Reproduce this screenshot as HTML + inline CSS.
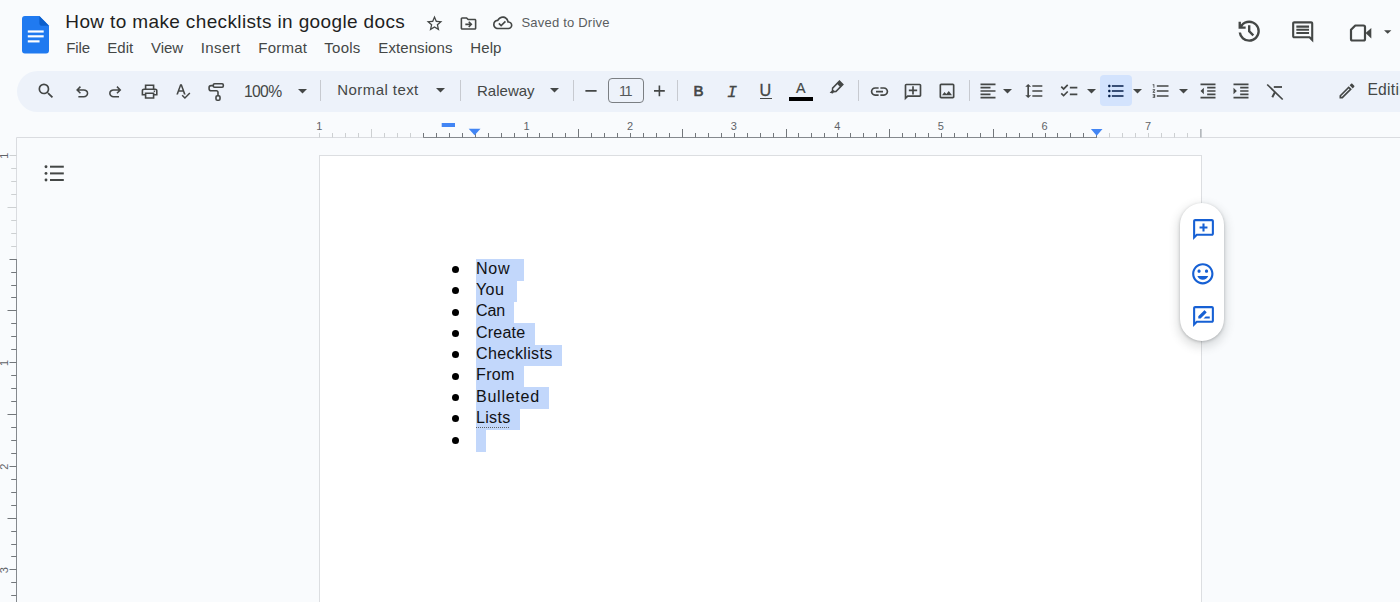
<!DOCTYPE html>
<html><head><meta charset="utf-8"><title>How to make checklists in google docs</title>
<style>
*{box-sizing:border-box;margin:0;padding:0}
html,body{width:1400px;height:602px;overflow:hidden;background:#f9fbfd;font-family:"Liberation Sans",sans-serif;color:#444746}
.abs{position:absolute}
.tx,.li{white-space:nowrap}
.menu{line-height:18px;color:#444746}
.tbt{line-height:18px;color:#444746}
#toolbar{left:17px;top:70.6px;width:1420px;height:41.6px;border-radius:21px;background:#edf2fa}
.sep{top:80px;width:1px;height:21px;background:#c7cad0}
svg{position:absolute;overflow:visible}
.ic{fill:#444746}
#page{left:319px;top:155px;width:883px;height:460px;background:#fff;border:1px solid #dcdee1}
.li{line-height:20px;color:#101114;z-index:3;transform-origin:0 0}
.sel{background:#c2d7fb;left:475.8px;z-index:1}
.bul{left:451.5px;width:7px;height:7px;border-radius:50%;background:#000;z-index:3}
#hl{left:1100px;top:75px;width:32px;height:31px;border-radius:4px;background:#d3e3fd}
#fsbox{left:608px;top:78.3px;width:36px;height:25px;border:1px solid #7b7f83;border-radius:4px}
#pill{left:1179.5px;top:202.6px;width:44.4px;height:138.6px;border-radius:22.2px;background:#fff;box-shadow:0 1px 3px rgba(60,64,67,.3),0 4px 8px 3px rgba(60,64,67,.15);z-index:5}
.gl{white-space:nowrap;color:#444746;line-height:20px}
</style></head><body>
<svg style="left:22.1px;top:16.1px" width="27" height="37.5" viewBox="0 0 28 38" preserveAspectRatio="none">
<path d="M3 0h15l10 10v25a3 3 0 0 1-3 3H3a3 3 0 0 1-3-3V3a3 3 0 0 1 3-3z" fill="#207af0"/>
<path d="M18 0l10 10h-7a3 3 0 0 1-3-3z" fill="#0b5fcc"/>
<rect x="6" y="14.600" width="16.500" height="2.200" fill="#fff"/><rect x="6" y="19.500" width="16.500" height="2.200" fill="#fff"/><rect x="6" y="24.600" width="12.200" height="2.200" fill="#fff"/>
</svg>
<div id="toolbar" class="abs"></div>
<div id="hl" class="abs"></div>
<div id="fsbox" class="abs"></div>
<div class="abs sep" style="left:320px"></div>
<div class="abs sep" style="left:460px"></div>
<div class="abs sep" style="left:573px"></div>
<div class="abs sep" style="left:677px"></div>
<div class="abs sep" style="left:858px"></div>
<div class="abs sep" style="left:969px"></div>
<div id="title" class="abs tx tbt" style="left:65.3px;top:9.5px;font-size:19px;letter-spacing:0.366px;color:#1f1f1f;line-height:24px">How to make checklists in google docs</div>
<div id="saved" class="abs tx " style="left:521.5px;top:15px;font-size:13px;letter-spacing:0.203px;color:#5a5d60;line-height:16px">Saved to Drive</div>
<div id="m1" class="abs tx menu" style="left:66.3px;top:39px;font-size:15px;letter-spacing:-0.135px;">File</div>
<div id="m2" class="abs tx menu" style="left:107.3px;top:39px;font-size:15px;letter-spacing:0.040px;">Edit</div>
<div id="m3" class="abs tx menu" style="left:151px;top:39px;font-size:15px;letter-spacing:-0.071px;">View</div>
<div id="m4" class="abs tx menu" style="left:200.8px;top:39px;font-size:15px;letter-spacing:0.361px;">Insert</div>
<div id="m5" class="abs tx menu" style="left:258.3px;top:39px;font-size:15px;letter-spacing:0.215px;">Format</div>
<div id="m6" class="abs tx menu" style="left:324.3px;top:39px;font-size:15px;letter-spacing:0.260px;">Tools</div>
<div id="m7" class="abs tx menu" style="left:378.3px;top:39px;font-size:15px;letter-spacing:0.087px;">Extensions</div>
<div id="m8" class="abs tx menu" style="left:470.3px;top:39px;font-size:15px;letter-spacing:0.097px;">Help</div>
<div id="t1" class="abs tx tbt" style="left:244px;top:83.1px;font-size:15.7px;letter-spacing:-0.664px;">100%</div>
<div id="t2" class="abs tx tbt" style="left:337.3px;top:81.2px;font-size:15px;letter-spacing:0.430px;">Normal text</div>
<div id="t3" class="abs tx tbt" style="left:477px;top:81.5px;font-size:15px;letter-spacing:0.011px;">Raleway</div>
<div id="t4" class="abs tx tbt" style="left:619.0px;top:81.6px;font-size:14.5px;letter-spacing:-1.600px;color:#55585a">11</div>
<div id="t5" class="abs tx tbt" style="left:1367.4px;top:81.3px;font-size:15.7px;letter-spacing:0.250px;">Editing</div>
<div id="l0" class="abs li" style="left:476.0px;top:258.50px;font-size:15.6px;letter-spacing:0.723px;transform:scaleX(1.03)">Now</div>
<div id="l1" class="abs li" style="left:476.0px;top:279.86px;font-size:15.6px;letter-spacing:0.343px;transform:scaleX(1.03)">You</div>
<div id="l2" class="abs li" style="left:476.0px;top:301.22px;font-size:15.6px;letter-spacing:-0.182px;transform:scaleX(1.03)">Can</div>
<div id="l3" class="abs li" style="left:476.0px;top:322.58px;font-size:15.6px;letter-spacing:0.191px;transform:scaleX(1.03)">Create</div>
<div id="l4" class="abs li" style="left:476.0px;top:343.94px;font-size:15.6px;letter-spacing:0.338px;transform:scaleX(1.03)">Checklists</div>
<div id="l5" class="abs li" style="left:476.0px;top:365.30px;font-size:15.6px;letter-spacing:0.310px;transform:scaleX(1.03)">From</div>
<div id="l6" class="abs li" style="left:476.0px;top:386.66px;font-size:15.6px;letter-spacing:0.705px;transform:scaleX(1.03)">Bulleted</div>
<div id="l7" class="abs li" style="left:476.0px;top:408.02px;font-size:15.6px;letter-spacing:0.293px;transform:scaleX(1.03)">Lists</div>
<svg style="left:0;top:0" width="1400" height="602">
<line x1="16.5" y1="137.5" x2="1400" y2="137.5" stroke="#dadce0" stroke-width="1"/>
<line x1="16.5" y1="137.5" x2="16.5" y2="602" stroke="#dadce0" stroke-width="1"/>
<line x1="423.4" y1="137.5" x2="1097" y2="137.5" stroke="#85898e" stroke-width="1"/>
<line x1="16.5" y1="259" x2="16.5" y2="602" stroke="#85898e" stroke-width="1"/>
<line x1="319.50" y1="133.0" x2="319.50" y2="137.5" stroke="#cdd0d2" stroke-width="1"/>
<line x1="332.50" y1="133.0" x2="332.50" y2="137.5" stroke="#cdd0d2" stroke-width="1"/>
<line x1="345.50" y1="133.0" x2="345.50" y2="137.5" stroke="#cdd0d2" stroke-width="1"/>
<line x1="358.50" y1="133.0" x2="358.50" y2="137.5" stroke="#cdd0d2" stroke-width="1"/>
<line x1="371.50" y1="129.0" x2="371.50" y2="137.5" stroke="#cdd0d2" stroke-width="1"/>
<line x1="384.50" y1="133.0" x2="384.50" y2="137.5" stroke="#cdd0d2" stroke-width="1"/>
<line x1="397.50" y1="133.0" x2="397.50" y2="137.5" stroke="#cdd0d2" stroke-width="1"/>
<line x1="410.50" y1="133.0" x2="410.50" y2="137.5" stroke="#cdd0d2" stroke-width="1"/>
<line x1="423.50" y1="133.0" x2="423.50" y2="137.5" stroke="#73777b" stroke-width="1"/>
<line x1="436.50" y1="133.0" x2="436.50" y2="137.5" stroke="#73777b" stroke-width="1"/>
<line x1="449.50" y1="133.0" x2="449.50" y2="137.5" stroke="#73777b" stroke-width="1"/>
<line x1="462.50" y1="133.0" x2="462.50" y2="137.5" stroke="#73777b" stroke-width="1"/>
<line x1="475.50" y1="129.0" x2="475.50" y2="137.5" stroke="#73777b" stroke-width="1"/>
<line x1="488.50" y1="133.0" x2="488.50" y2="137.5" stroke="#73777b" stroke-width="1"/>
<line x1="501.50" y1="133.0" x2="501.50" y2="137.5" stroke="#73777b" stroke-width="1"/>
<line x1="514.50" y1="133.0" x2="514.50" y2="137.5" stroke="#73777b" stroke-width="1"/>
<line x1="527.50" y1="133.0" x2="527.50" y2="137.5" stroke="#73777b" stroke-width="1"/>
<line x1="539.50" y1="133.0" x2="539.50" y2="137.5" stroke="#73777b" stroke-width="1"/>
<line x1="552.50" y1="133.0" x2="552.50" y2="137.5" stroke="#73777b" stroke-width="1"/>
<line x1="565.50" y1="133.0" x2="565.50" y2="137.5" stroke="#73777b" stroke-width="1"/>
<line x1="578.50" y1="129.0" x2="578.50" y2="137.5" stroke="#73777b" stroke-width="1"/>
<line x1="591.50" y1="133.0" x2="591.50" y2="137.5" stroke="#73777b" stroke-width="1"/>
<line x1="604.50" y1="133.0" x2="604.50" y2="137.5" stroke="#73777b" stroke-width="1"/>
<line x1="617.50" y1="133.0" x2="617.50" y2="137.5" stroke="#73777b" stroke-width="1"/>
<line x1="630.50" y1="133.0" x2="630.50" y2="137.5" stroke="#73777b" stroke-width="1"/>
<line x1="643.50" y1="133.0" x2="643.50" y2="137.5" stroke="#73777b" stroke-width="1"/>
<line x1="656.50" y1="133.0" x2="656.50" y2="137.5" stroke="#73777b" stroke-width="1"/>
<line x1="669.50" y1="133.0" x2="669.50" y2="137.5" stroke="#73777b" stroke-width="1"/>
<line x1="682.50" y1="129.0" x2="682.50" y2="137.5" stroke="#73777b" stroke-width="1"/>
<line x1="695.50" y1="133.0" x2="695.50" y2="137.5" stroke="#73777b" stroke-width="1"/>
<line x1="708.50" y1="133.0" x2="708.50" y2="137.5" stroke="#73777b" stroke-width="1"/>
<line x1="721.50" y1="133.0" x2="721.50" y2="137.5" stroke="#73777b" stroke-width="1"/>
<line x1="734.50" y1="133.0" x2="734.50" y2="137.5" stroke="#73777b" stroke-width="1"/>
<line x1="747.50" y1="133.0" x2="747.50" y2="137.5" stroke="#73777b" stroke-width="1"/>
<line x1="760.50" y1="133.0" x2="760.50" y2="137.5" stroke="#73777b" stroke-width="1"/>
<line x1="773.50" y1="133.0" x2="773.50" y2="137.5" stroke="#73777b" stroke-width="1"/>
<line x1="786.50" y1="129.0" x2="786.50" y2="137.5" stroke="#73777b" stroke-width="1"/>
<line x1="798.50" y1="133.0" x2="798.50" y2="137.5" stroke="#73777b" stroke-width="1"/>
<line x1="811.50" y1="133.0" x2="811.50" y2="137.5" stroke="#73777b" stroke-width="1"/>
<line x1="824.50" y1="133.0" x2="824.50" y2="137.5" stroke="#73777b" stroke-width="1"/>
<line x1="837.50" y1="133.0" x2="837.50" y2="137.5" stroke="#73777b" stroke-width="1"/>
<line x1="850.50" y1="133.0" x2="850.50" y2="137.5" stroke="#73777b" stroke-width="1"/>
<line x1="863.50" y1="133.0" x2="863.50" y2="137.5" stroke="#73777b" stroke-width="1"/>
<line x1="876.50" y1="133.0" x2="876.50" y2="137.5" stroke="#73777b" stroke-width="1"/>
<line x1="889.50" y1="129.0" x2="889.50" y2="137.5" stroke="#73777b" stroke-width="1"/>
<line x1="902.50" y1="133.0" x2="902.50" y2="137.5" stroke="#73777b" stroke-width="1"/>
<line x1="915.50" y1="133.0" x2="915.50" y2="137.5" stroke="#73777b" stroke-width="1"/>
<line x1="928.50" y1="133.0" x2="928.50" y2="137.5" stroke="#73777b" stroke-width="1"/>
<line x1="941.50" y1="133.0" x2="941.50" y2="137.5" stroke="#73777b" stroke-width="1"/>
<line x1="954.50" y1="133.0" x2="954.50" y2="137.5" stroke="#73777b" stroke-width="1"/>
<line x1="967.50" y1="133.0" x2="967.50" y2="137.5" stroke="#73777b" stroke-width="1"/>
<line x1="980.50" y1="133.0" x2="980.50" y2="137.5" stroke="#73777b" stroke-width="1"/>
<line x1="993.50" y1="129.0" x2="993.50" y2="137.5" stroke="#73777b" stroke-width="1"/>
<line x1="1006.50" y1="133.0" x2="1006.50" y2="137.5" stroke="#73777b" stroke-width="1"/>
<line x1="1019.50" y1="133.0" x2="1019.50" y2="137.5" stroke="#73777b" stroke-width="1"/>
<line x1="1032.50" y1="133.0" x2="1032.50" y2="137.5" stroke="#73777b" stroke-width="1"/>
<line x1="1045.50" y1="133.0" x2="1045.50" y2="137.5" stroke="#73777b" stroke-width="1"/>
<line x1="1057.50" y1="133.0" x2="1057.50" y2="137.5" stroke="#73777b" stroke-width="1"/>
<line x1="1070.50" y1="133.0" x2="1070.50" y2="137.5" stroke="#73777b" stroke-width="1"/>
<line x1="1083.50" y1="133.0" x2="1083.50" y2="137.5" stroke="#73777b" stroke-width="1"/>
<line x1="1096.50" y1="129.0" x2="1096.50" y2="137.5" stroke="#73777b" stroke-width="1"/>
<line x1="1109.50" y1="133.0" x2="1109.50" y2="137.5" stroke="#cdd0d2" stroke-width="1"/>
<line x1="1122.50" y1="133.0" x2="1122.50" y2="137.5" stroke="#cdd0d2" stroke-width="1"/>
<line x1="1135.50" y1="133.0" x2="1135.50" y2="137.5" stroke="#cdd0d2" stroke-width="1"/>
<line x1="1148.50" y1="133.0" x2="1148.50" y2="137.5" stroke="#cdd0d2" stroke-width="1"/>
<line x1="1161.50" y1="133.0" x2="1161.50" y2="137.5" stroke="#cdd0d2" stroke-width="1"/>
<line x1="1174.50" y1="133.0" x2="1174.50" y2="137.5" stroke="#cdd0d2" stroke-width="1"/>
<line x1="1187.50" y1="133.0" x2="1187.50" y2="137.5" stroke="#cdd0d2" stroke-width="1"/>
<line x1="1200.50" y1="129.0" x2="1200.50" y2="137.5" stroke="#cdd0d2" stroke-width="1"/>
<line x1="1201" y1="129" x2="1201" y2="137.5" stroke="#9aa0a6" stroke-width="1"/>
<text x="319.3" y="130.3" font-size="11" fill="#5f6368" text-anchor="middle" font-family="Liberation Sans, sans-serif">1</text>
<text x="526.5" y="130.3" font-size="11" fill="#5f6368" text-anchor="middle" font-family="Liberation Sans, sans-serif">1</text>
<text x="630.1" y="130.3" font-size="11" fill="#5f6368" text-anchor="middle" font-family="Liberation Sans, sans-serif">2</text>
<text x="733.7" y="130.3" font-size="11" fill="#5f6368" text-anchor="middle" font-family="Liberation Sans, sans-serif">3</text>
<text x="837.3" y="130.3" font-size="11" fill="#5f6368" text-anchor="middle" font-family="Liberation Sans, sans-serif">4</text>
<text x="940.9" y="130.3" font-size="11" fill="#5f6368" text-anchor="middle" font-family="Liberation Sans, sans-serif">5</text>
<text x="1044.5" y="130.3" font-size="11" fill="#5f6368" text-anchor="middle" font-family="Liberation Sans, sans-serif">6</text>
<text x="1148.1" y="130.3" font-size="11" fill="#5f6368" text-anchor="middle" font-family="Liberation Sans, sans-serif">7</text>
<line x1="9.5" y1="155.50" x2="16.5" y2="155.50" stroke="#cdd0d2" stroke-width="1"/>
<line x1="11.2" y1="168.50" x2="16.5" y2="168.50" stroke="#cdd0d2" stroke-width="1"/>
<line x1="11.2" y1="181.50" x2="16.5" y2="181.50" stroke="#cdd0d2" stroke-width="1"/>
<line x1="11.2" y1="194.50" x2="16.5" y2="194.50" stroke="#cdd0d2" stroke-width="1"/>
<line x1="7.5" y1="207.50" x2="16.5" y2="207.50" stroke="#cdd0d2" stroke-width="1"/>
<line x1="11.2" y1="220.50" x2="16.5" y2="220.50" stroke="#cdd0d2" stroke-width="1"/>
<line x1="11.2" y1="233.50" x2="16.5" y2="233.50" stroke="#cdd0d2" stroke-width="1"/>
<line x1="11.2" y1="246.50" x2="16.5" y2="246.50" stroke="#cdd0d2" stroke-width="1"/>
<line x1="9.5" y1="259.50" x2="16.5" y2="259.50" stroke="#73777b" stroke-width="1"/>
<line x1="11.2" y1="272.50" x2="16.5" y2="272.50" stroke="#73777b" stroke-width="1"/>
<line x1="11.2" y1="285.50" x2="16.5" y2="285.50" stroke="#73777b" stroke-width="1"/>
<line x1="11.2" y1="297.50" x2="16.5" y2="297.50" stroke="#73777b" stroke-width="1"/>
<line x1="7.5" y1="310.50" x2="16.5" y2="310.50" stroke="#73777b" stroke-width="1"/>
<line x1="11.2" y1="323.50" x2="16.5" y2="323.50" stroke="#73777b" stroke-width="1"/>
<line x1="11.2" y1="336.50" x2="16.5" y2="336.50" stroke="#73777b" stroke-width="1"/>
<line x1="11.2" y1="349.50" x2="16.5" y2="349.50" stroke="#73777b" stroke-width="1"/>
<line x1="9.5" y1="362.50" x2="16.5" y2="362.50" stroke="#73777b" stroke-width="1"/>
<line x1="11.2" y1="375.50" x2="16.5" y2="375.50" stroke="#73777b" stroke-width="1"/>
<line x1="11.2" y1="388.50" x2="16.5" y2="388.50" stroke="#73777b" stroke-width="1"/>
<line x1="11.2" y1="401.50" x2="16.5" y2="401.50" stroke="#73777b" stroke-width="1"/>
<line x1="7.5" y1="414.50" x2="16.5" y2="414.50" stroke="#73777b" stroke-width="1"/>
<line x1="11.2" y1="427.50" x2="16.5" y2="427.50" stroke="#73777b" stroke-width="1"/>
<line x1="11.2" y1="440.50" x2="16.5" y2="440.50" stroke="#73777b" stroke-width="1"/>
<line x1="11.2" y1="453.50" x2="16.5" y2="453.50" stroke="#73777b" stroke-width="1"/>
<line x1="9.5" y1="466.50" x2="16.5" y2="466.50" stroke="#73777b" stroke-width="1"/>
<line x1="11.2" y1="479.50" x2="16.5" y2="479.50" stroke="#73777b" stroke-width="1"/>
<line x1="11.2" y1="492.50" x2="16.5" y2="492.50" stroke="#73777b" stroke-width="1"/>
<line x1="11.2" y1="505.50" x2="16.5" y2="505.50" stroke="#73777b" stroke-width="1"/>
<line x1="7.5" y1="518.50" x2="16.5" y2="518.50" stroke="#73777b" stroke-width="1"/>
<line x1="11.2" y1="531.50" x2="16.5" y2="531.50" stroke="#73777b" stroke-width="1"/>
<line x1="11.2" y1="544.50" x2="16.5" y2="544.50" stroke="#73777b" stroke-width="1"/>
<line x1="11.2" y1="556.50" x2="16.5" y2="556.50" stroke="#73777b" stroke-width="1"/>
<line x1="9.5" y1="569.50" x2="16.5" y2="569.50" stroke="#73777b" stroke-width="1"/>
<line x1="11.2" y1="582.50" x2="16.5" y2="582.50" stroke="#73777b" stroke-width="1"/>
<line x1="11.2" y1="595.50" x2="16.5" y2="595.50" stroke="#73777b" stroke-width="1"/>
<text transform="translate(8.3,155.8) rotate(-90)" font-size="11" fill="#5f6368" text-anchor="middle" font-family="Liberation Sans, sans-serif">1</text>
<text transform="translate(8.3,363.0) rotate(-90)" font-size="11" fill="#5f6368" text-anchor="middle" font-family="Liberation Sans, sans-serif">1</text>
<text transform="translate(8.3,466.6) rotate(-90)" font-size="11" fill="#5f6368" text-anchor="middle" font-family="Liberation Sans, sans-serif">2</text>
<text transform="translate(8.3,570.2) rotate(-90)" font-size="11" fill="#5f6368" text-anchor="middle" font-family="Liberation Sans, sans-serif">3</text>
<rect x="441.7" y="123" width="13.3" height="4" fill="#4285f4"/>
<path d="M468.7 128.7h11.8l-5.9 6.6z" fill="#4285f4"/>
<path d="M1090.9 128.9h11.6l-5.8 6.8z" fill="#4285f4"/>
</svg>
<div id="page" class="abs"></div>
<div class="abs sel" style="top:259.1px;height:21.66px;width:48.1px"></div>
<div class="abs bul" style="top:265.90px"></div>
<div class="abs sel" style="top:280.46px;height:21.66px;width:41.6px"></div>
<div class="abs bul" style="top:287.26px"></div>
<div class="abs sel" style="top:301.82px;height:21.66px;width:38.6px"></div>
<div class="abs bul" style="top:308.62px"></div>
<div class="abs sel" style="top:323.18px;height:21.66px;width:58.8px"></div>
<div class="abs bul" style="top:329.98px"></div>
<div class="abs sel" style="top:344.54px;height:21.66px;width:86.0px"></div>
<div class="abs bul" style="top:351.34px"></div>
<div class="abs sel" style="top:365.9px;height:21.66px;width:48.1px"></div>
<div class="abs bul" style="top:372.70px"></div>
<div class="abs sel" style="top:387.26px;height:21.66px;width:73.0px"></div>
<div class="abs bul" style="top:394.06px"></div>
<div class="abs sel" style="top:408.62px;height:21.66px;width:44.3px"></div>
<div class="abs bul" style="top:415.42px"></div>
<div class="abs sel" style="top:429.98px;height:21.66px;width:9.9px"></div>
<div class="abs bul" style="top:436.78px"></div>
<div class="abs" style="left:476.2px;top:426.5px;width:33px;height:0;border-top:1.5px dotted #5f6368;z-index:4"></div>
<div id="pill" class="abs"></div>
<svg style="left:36.20px;top:81.00px;" width="20" height="20" viewBox="0 0 24 24" fill="#444746"><path d="M15.5 14h-.79l-.28-.27A6.471 6.471 0 0 0 16 9.5 6.5 6.5 0 1 0 9.5 16c1.61 0 3.09-.59 4.23-1.57l.27.28v.79l5 4.99L20.49 19l-4.99-5zm-6 0C7.01 14 5 11.990 5 9.500S7.010 5 9.500 5 14 7.010 14 9.500 11.990 14 9.500 14z"/></svg>
<svg style="left:73.40px;top:83.40px;" width="18.4" height="18.4" viewBox="0 -960 960 960" fill="#444746"><path d="M280-200v-80h284q63 0 109.500-40T720-420q0-60-46.500-100T564-560H312l104 104-56 56-200-200 200-200 56 56-104 104h252q97 0 166.500 63T800-420q0 94-69.500 157T564-200H280Z"/></svg>
<svg style="left:106.40px;top:83.40px;" width="18.4" height="18.4" viewBox="0 -960 960 960" fill="#444746"><path d="M396-200q-97 0-166.500-63T160-420q0-94 69.500-157T396-640h252L544-744l56-56 200 200-200 200-56-56 104-104H396q-63 0-109.500 40T240-420q0 60 46.500 100T396-280h284v80H396Z"/></svg>
<svg style="left:140.30px;top:81.70px;" width="19.2" height="19.2" viewBox="0 -960 960 960" fill="#444746"><path d="M640-640v-120H320v120h-80v-200h480v200h-80Zm-480 80h640-640Zm560 100q17 0 28.500-11.500T760-500q0-17-11.500-28.500T720-540q-17 0-28.500 11.500T680-500q0 17 11.500 28.500T720-460Zm-80 260v-160H320v160h320Zm80 80H240v-160H80v-240q0-51 35-85.500t85-34.500h560q51 0 85.500 34.500T880-520v240H720v160Zm80-240v-160q0-17-11.500-28.500T760-560H200q-17 0-28.500 11.500T160-520v160h80v-80h480v80h80Z"/></svg>
<svg style="left:174.30px;top:81.90px;" width="18.6" height="18.6" viewBox="0 -960 960 960" fill="#444746"><path d="M564-80 394-250l56-56 114 114 226-226 56 56L564-80ZM120-320l194-520h94l194 520h-92l-46-132H254l-46 132h-88Zm162-208h156l-76-216h-4l-76 216Z"/></svg>
<svg style="left:0;top:0" width="1400" height="120"><g fill="none" stroke="#444746" stroke-width="1.600" stroke-linejoin="round" stroke-linecap="round"><rect x="213.300" y="83.800" width="10" height="3.500" rx="1.200"/><path d="M213.300 85.600h-2.200a2 2 0 0 0-2 2v1.200a2 2 0 0 0 2 2h5.400a1.500 1.500 0 0 1 1.500 1.500v3.300"/><rect x="216" y="95.700" width="4" height="4.600" rx="1.300"/></g></svg>
<svg style="left:297.50px;top:88.95px" width="9.0" height="4.7" viewBox="0 0 10 5" fill="#444746"><path d="M0 0h10L5 5z"/></svg>
<svg style="left:436.10px;top:88.45px" width="9.0" height="4.7" viewBox="0 0 10 5" fill="#444746"><path d="M0 0h10L5 5z"/></svg>
<svg style="left:549.60px;top:88.45px" width="9.0" height="4.7" viewBox="0 0 10 5" fill="#444746"><path d="M0 0h10L5 5z"/></svg>
<svg style="left:0;top:0" width="1400" height="120"><g stroke="#444746" stroke-width="1.600" fill="none"><path d="M585.400 90.900h11.200M654 90.900h10.800M659.400 85.500v10.800"/></g></svg>
<svg style="left:868.70px;top:81.10px;" width="21" height="21" viewBox="0 0 24 24" fill="#444746"><path d="M3.900 12c0-1.710 1.390-3.100 3.100-3.100h4V7H7c-2.760 0-5 2.240-5 5s2.240 5 5 5h4v-1.900H7c-1.710 0-3.100-1.390-3.100-3.100zM8 13h8v-2H8v2zm9-6h-4v1.900h4c1.710 0 3.100 1.390 3.100 3.100s-1.390 3.100-3.100 3.100h-4V17h4c2.760 0 5-2.240 5-5s-2.240-5-5-5z"/></svg>
<svg style="left:902.60px;top:81.50px;" width="20" height="20" viewBox="0 0 24 24" fill="#444746"><g transform="translate(24,0) scale(-1,1)"><path d="M22 4c0-1.100-.9-2-2-2H4c-1.100 0-2 .9-2 2v12c0 1.100.9 2 2 2h14l4 4V4zm-2 13.170L18.830 16H4V4h16v13.170zM13 5h-2v4H7v2h4v4h2v-4h4V9h-4z"/></g></svg>
<svg style="left:937.30px;top:81.40px;" width="20" height="20" viewBox="0 0 24 24" fill="#444746"><path d="M19 5v14H5V5h14m0-2H5c-1.100 0-2 .9-2 2v14c0 1.100.9 2 2 2h14c1.100 0 2-.9 2-2V5c0-1.100-.9-2-2-2zm-4.860 8.860l-3 3.870L9 13.140 6 17h12l-3.860-5.140z"/></svg>
<svg style="left:978.00px;top:81.20px;" width="20" height="20" viewBox="0 0 24 24" fill="#444746"><path d="M15 15H3v2h12v-2zm0-8H3v2h12V7zM3 13h18v-2H3v2zm0 8h18v-2H3v2zM3 3v2h18V3H3z"/></svg>
<svg style="left:1003.00px;top:89.25px" width="9.0" height="4.7" viewBox="0 0 10 5" fill="#444746"><path d="M0 0h10L5 5z"/></svg>
<svg style="left:1023.60px;top:81.40px;" width="20" height="20" viewBox="0 0 24 24" fill="#444746"><path d="M6 7h2.500L5 3.500 1.500 7H4v10H1.500L5 20.500 8.500 17H6V7zm4-2v2h12V5H10zm0 14h12v-2H10v2zm0-6h12v-2H10v2z"/></svg>
<svg style="left:1059.20px;top:81.20px;" width="20" height="20" viewBox="0 0 24 24" fill="#444746"><path d="M22 7h-9v2h9V7zm0 8h-9v2h9v-2zM5.540 11L2 7.460l1.410-1.410 2.120 2.120 4.240-4.240 1.410 1.410L5.540 11zm0 8L2 15.460l1.410-1.410 2.120 2.120 4.240-4.240 1.410 1.410L5.540 19z"/></svg>
<svg style="left:1087.00px;top:89.25px" width="9.0" height="4.7" viewBox="0 0 10 5" fill="#444746"><path d="M0 0h10L5 5z"/></svg>
<svg style="left:1105.60px;top:81.40px;" width="20" height="20" viewBox="0 0 24 24" fill="#041e49"><path d="M4 10.500c-.830 0-1.500.670-1.500 1.500s.670 1.500 1.500 1.500 1.500-.670 1.500-1.500-.670-1.500-1.500-1.500zm0-6c-.830 0-1.500.670-1.500 1.500S3.170 7.500 4 7.500 5.500 6.830 5.500 6 4.830 4.500 4 4.500zm0 12c-.830 0-1.500.680-1.500 1.500s.680 1.500 1.500 1.500 1.500-.680 1.500-1.500-.670-1.500-1.500-1.500zM7 19h14v-2H7v2zm0-6h14v-2H7v2zm0-8v2h14V5H7z"/></svg>
<svg style="left:1133.00px;top:89.25px" width="9.0" height="4.7" viewBox="0 0 10 5" fill="#444746"><path d="M0 0h10L5 5z"/></svg>
<svg style="left:1151.40px;top:81.40px;" width="20" height="20" viewBox="0 0 24 24" fill="#444746"><path d="M2 17h2v.500H3v1h1v.500H2v1h3v-4H2v1zm1-9h1V4H2v1h1v3zm-1 3h1.800L2 13.100v.9h3v-1H3.200L5 10.900V10H2v1zm5-6v2h14V5H7zm0 14h14v-2H7v2zm0-6h14v-2H7v2z"/></svg>
<svg style="left:1178.90px;top:89.25px" width="9.0" height="4.7" viewBox="0 0 10 5" fill="#444746"><path d="M0 0h10L5 5z"/></svg>
<svg style="left:1197.60px;top:81.20px;" width="20" height="20" viewBox="0 0 24 24" fill="#444746"><path d="M11 17h10v-2H11v2zm-8-5l4 4V8l-4 4zm0 9h18v-2H3v2zM3 3v2h18V3H3zm8 6h10V7H11v2zm0 4h10v-2H11v2z"/></svg>
<svg style="left:1231.00px;top:81.20px;" width="20" height="20" viewBox="0 0 24 24" fill="#444746"><path d="M3 21h18v-2H3v2zM3 8v8l4-4-4-4zm8 9h10v-2H11v2zM3 3v2h18V3H3zm8 6h10V7H11v2zm0 4h10v-2H11v2z"/></svg>
<svg style="left:0;top:0" width="1400" height="120"><g fill="none" stroke="#444746" stroke-width="1.700"><path d="M1267.200 84.500L1282.700 99.500"/><path d="M1273.800 87h8.200" stroke-width="1.800"/><path d="M1274.900 92.200L1272.300 97.300" stroke-width="2"/></g></svg>
<svg style="left:1337.30px;top:81.20px;" width="20" height="20" viewBox="0 0 24 24" fill="#444746"><path d="M14.060 9.020l.920.920L5.920 19H5v-.920l9.060-9.060M17.660 3c-.250 0-.510.100-.700.290l-1.830 1.830 3.750 3.750 1.830-1.830c.390-.390.390-1.020 0-1.410l-2.340-2.340c-.200-.200-.450-.290-.710-.290zm-3.600 3.190L3 17.250V21h3.750L17.810 9.940l-3.750-3.750z"/></svg>
<svg style="left:825.7px;top:79px" width="19" height="19" viewBox="0 0 24 24" fill="#444746"><g transform="rotate(45 12 12)"><path d="M8 1h8v13.500l-2 2.800v1.500l-3.500 2.200v-3.700l-2.500-2.800z"/><path d="M10 6.500h4v7.300l-1 1.400h-2l-1-1.400z" fill="#edf2fa"/></g></svg>
<div class="abs gl" style="left:693.6px;top:80.7px;font-size:15px;-webkit-text-stroke:0.7px #444746">B</div>
<div class="abs gl" style="left:726.9px;top:82.6px;font-size:16.8px;font-family:'Liberation Mono',monospace;font-style:italic;-webkit-text-stroke:0.3px #444746">I</div>
<div class="abs gl" style="left:759.6px;top:80.1px;font-size:16.2px;-webkit-text-stroke:0.3px #444746">U</div>
<div class="abs" style="left:759.800px;top:97.500px;width:12px;height:1.500px;background:#444746"></div>
<div class="abs gl" style="left:796.1px;top:78.4px;font-size:14.3px;-webkit-text-stroke:0.2px #444746">A</div>
<div class="abs" style="left:789px;top:97.200px;width:23.600px;height:4.100px;background:#000"></div>
<svg style="left:424.6px;top:14.2px;" width="19" height="19" viewBox="0 0 24 24" fill="#444746"><path d="M22 9.240l-7.190-.620L12 2 9.190 8.630 2 9.240l5.460 4.730L5.820 21 12 17.270 18.180 21l-1.630-7.030L22 9.240zM12 15.400l-3.760 2.270 1-4.280-3.320-2.880 4.380-.380L12 6.100l1.710 4.040 4.380.380-3.320 2.880 1 4.280L12 15.400z"/></svg>
<svg style="left:459.00px;top:13.70px;" width="19" height="19" viewBox="0 0 24 24" fill="#444746"><path d="M20 6h-8l-2-2H4c-1.100 0-1.990.9-1.990 2L2 18c0 1.100.9 2 2 2h16c1.100 0 2-.9 2-2V8c0-1.100-.9-2-2-2zm0 12H4V6h5.170l2 2H20v10z M8 12.100h5.200l-1.600-1.600L13 9.100l4 4-4 4-1.400-1.400 1.600-1.600H8z"/></svg>
<svg style="left:493.05px;top:13.45px;" width="19.5" height="19.5" viewBox="0 0 24 24" fill="#444746"><path d="M19.350 10.040C18.670 6.590 15.640 4 12 4 9.110 4 6.600 5.640 5.350 8.040 2.340 8.360 0 10.910 0 14c0 3.310 2.690 6 6 6h13c2.760 0 5-2.240 5-5 0-2.640-2.050-4.780-4.650-4.960zM19 18H6c-2.210 0-4-1.790-4-4 0-2.050 1.530-3.760 3.560-3.970l1.070-.110.500-.950C8.080 7.140 9.940 6 12 6c2.620 0 4.880 1.860 5.390 4.430l.300 1.500 1.530.110c1.560.100 2.780 1.410 2.780 2.960 0 1.650-1.350 3-3 3zm-9-3.820l-2.090-2.090L6.500 13.500 10 17l6.010-6.010-1.410-1.410z"/></svg>
<svg style="left:1235.4px;top:16.9px" width="28.4" height="28.4" viewBox="0 -960 960 960" fill="#444746"><path d="M480-120q-138 0-240.500-91.500T122-440h82q14 104 92.500 172T480-200q117 0 198.500-81.500T760-480q0-117-81.500-198.500T480-760q-69 0-129 32t-101 88h110v80H120v-240h80v94q51-64 124.500-99T480-840q75 0 140.500 28.500t114 77q48.500 48.500 77 114T840-480q0 75-28.500 140.500t-77 114q-48.500 48.500-114 77T480-120Zm112-192L440-464v-216h80v184l128 128-56 56Z"/></svg>
<svg style="left:1289.90px;top:18.90px;" width="25.4" height="25.8" viewBox="0 0 24 24" fill="#444746"><path d="M21.990 4c0-1.100-.890-2-1.990-2H4c-1.100 0-2 .9-2 2v12c0 1.100.9 2 2 2h14l4 4-.010-18zM20 4v13.170L18.830 16H4V4h16zM6 12h12v2H6zm0-3h12v2H6zm0-3h12v2H6z"/></svg>
<svg style="left:1349px;top:23.5px" width="24" height="19" viewBox="0 0 24 19"><path d="M6.300 1.500H14.500a1.500 1.500 0 0 1 1.500 1.500v12a1.500 1.500 0 0 1-1.500 1.500H3.500a1.500 1.500 0 0 1-1.500-1.500V5.800z" fill="none" stroke="#444746" stroke-width="2.200" stroke-linejoin="round"/><path d="M16.500 9l5.800-5v10.500z" fill="#444746"/></svg>
<svg style="left:1383.50px;top:29.70px" width="7.4" height="4" viewBox="0 0 10 5" fill="#444746"><path d="M0 0h10L5 5z"/></svg>
<svg style="left:44px;top:164px" width="22" height="20" viewBox="0 0 22 20" fill="#444746"><rect x="6" y="1.700" width="13.800" height="2"/><rect x="6" y="8.400" width="13.800" height="2"/><rect x="6" y="15" width="13.800" height="2"/><circle cx="2" cy="2.700" r="1.450"/><circle cx="2" cy="9.400" r="1.450"/><circle cx="2" cy="16" r="1.450"/></svg>
<svg style="left:1190.50px;top:217.40px;z-index:6" width="25.0" height="25.0" viewBox="0 0 24 24" fill="#1660d4"><g transform="translate(24,0) scale(-1,1)"><path d="M22 4c0-1.100-.9-2-2-2H4c-1.100 0-2 .9-2 2v12c0 1.100.9 2 2 2h14l4 4V4zm-2 13.170L18.830 16H4V4h16v13.170zM13 6.200h-2v2.800H8.200v2H11v2.800h2V11h2.800V9H13z"/></g></svg>
<svg style="left:1190.00px;top:261.10px;z-index:6" width="25.6" height="25.6" viewBox="0 0 24 24" fill="#1660d4"><path d="M11.990 2C6.470 2 2 6.480 2 12s4.470 10 9.990 10C17.520 22 22 17.520 22 12S17.520 2 11.990 2zM12 20c-4.420 0-8-3.580-8-8s3.580-8 8-8 8 3.580 8 8-3.580 8-8 8zm3.500-9c.830 0 1.500-.670 1.500-1.500S16.330 8 15.500 8 14 8.670 14 9.500s.670 1.500 1.500 1.500zm-7 0c.830 0 1.500-.670 1.500-1.500S9.330 8 8.500 8 7 8.670 7 9.500 7.670 11 8.500 11zm3.500 6.500c2.330 0 4.310-1.460 5.110-3.500H6.890c.800 2.040 2.780 3.500 5.110 3.500z"/></svg>
<svg style="left:1190.50px;top:303.90px;z-index:6" width="25.0" height="25.0" viewBox="0 0 24 24" fill="#1660d4"><g transform="translate(24,0) scale(-1,1)"><path d="M22 4c0-1.100-.9-2-2-2H4c-1.100 0-2 .9-2 2v12c0 1.100.9 2 2 2h14l4 4V4zm-2 13.170L18.830 16H4V4h16v13.170z"/></g><path d="M7 14v-2.200l5.600-5.600c.200-.200.500-.200.700 0l1.500 1.500c.200.200.200.500 0 .700L9.200 14H7zm5 0l2-2h4v2h-6z"/></svg>
</body></html>
